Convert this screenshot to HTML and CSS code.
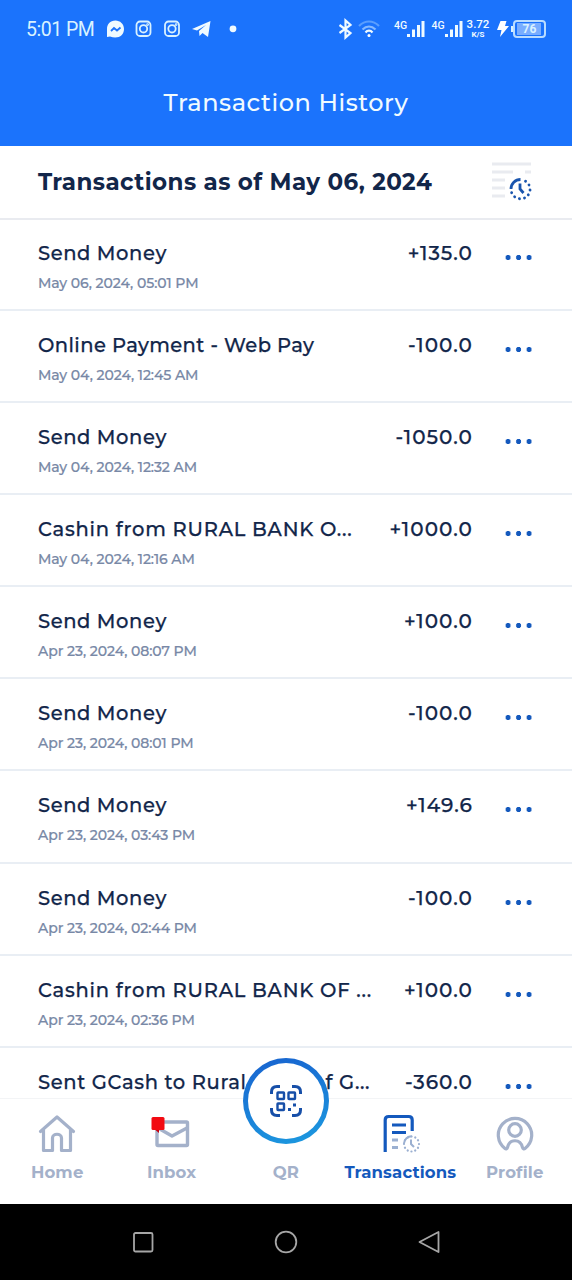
FILE: index.html
```html
<!DOCTYPE html>
<html lang="en">
<head>
<meta charset="utf-8">
<title>Transaction History</title>
<link rel="stylesheet" href="styles.css">
</head>
<body>
<header class="top">
  <div class="status">
    <span class="clock">5:01 PM</span>
    <svg class="status-left" width="140" height="20" viewBox="0 0 140 20" fill="none" stroke="#d9f2ff" stroke-width="1.8">
      <path d="M10.500 1.500C5 1.500 2 5.500 2 10v8l3-.5c8 3 14-1 14-7.500 0-5-4-8.500-8.500-8.500z" fill="#effaff" stroke="none"/>
      <path d="M6 12l3-3 3 2.500 3.500-3" stroke="#1c73fb"/>
      <g id="camera"><rect x="31.500" y="2.500" width="14" height="14.500" rx="3.500"/><circle cx="38.500" cy="9.800" r="3.700"/><circle cx="42.600" cy="5.600" r=".5"/></g>
      <use href="#camera" x="28.500"/>
      <path d="M87 10L105.500 2 103 18l-5.500-4-3 3-.5-5 7-6-9 5.500z" fill="#effaff" stroke="none"/>
      <circle cx="128" cy="9.800" r="3.400" fill="#effaff" stroke="none"/>
    </svg>
    <div class="status-right">
      <svg width="48" height="22" viewBox="0 0 48 22" fill="none" stroke="#effaff" stroke-width="2.200">
        <path d="M1.500 7l11 8-5 4.500v-17l5 4.500-11 8"/>
        <g transform="translate(0 -.5)"><path d="M21 8.500c6-6 14-6 20 0" stroke="#5a9efe"/><path d="M24.500 12c4-4 9-4 13 0" stroke="#86b9ff"/><path d="M27.500 15c2-2.500 5-2.500 7 0"/><circle cx="31" cy="18" r="1.500" fill="#fff" stroke="none"/></g>
      </svg>
      <div class="cell"><span>4G</span><svg width="18" height="18" viewBox="0 0 18 18" fill="#effaff"><path d="M0 14h3v3H0zM5 9.500h3V17H5zM10 5h3v12h-3zM14.500 1h3v16h-3z"/></svg></div>
      <div class="cell"><span>4G</span><svg width="18" height="18" viewBox="0 0 18 18" fill="#effaff"><path d="M0 14h3v3H0zM5 9.500h3V17H5zM10 5h3v12h-3zM14.500 1h3v16h-3z"/></svg></div>
      <div class="speed"><span>3.72</span><span class="unit">K/S</span></div>
      <svg class="bolt" width="12" height="18" viewBox="0 0 12 18" fill="#fff"><path d="M3.500 1h6L8 6h4L3 17l1.500-7H0z"/></svg>
      <div class="battery"><span>76</span></div>
    </div>
  </div>
  <h1>Transaction History</h1>
</header>

<main class="content">
  <div class="summary">
    <h2>Transactions as of May 06, 2024</h2>
    <svg width="42" height="40" viewBox="0 0 42 40" fill="none">
      <path d="M1 2h39M1 10h21M34 10h6M1 18h13M1 26h13M1 34h13" stroke="#e9ebf0" stroke-width="3"/>
      <path d="M20 27a9.500 9.500 0 0 1 9.500-9.500" stroke="#1a55ae" stroke-width="2.800"/>
      <path d="M34.500 19.200a9.500 9.500 0 1 1-14 11" stroke="#1a55ae" stroke-width="2.800" stroke-linecap="round" stroke-dasharray=".1 5"/>
      <path d="M29 21.500v5.500l3.500 4" stroke="#1a55ae" stroke-width="2.800"/>
    </svg>
  </div>
  <ul class="list">
    <li><div class="info"><b>Send Money</b><time>May 06, 2024, 05:01 PM</time></div><span class="amount">+135.0</span><i class="more"></i></li>
    <li><div class="info"><b class="web">Online Payment - Web Pay</b><time>May 04, 2024, 12:45 AM</time></div><span class="amount">-100.0</span><i class="more"></i></li>
    <li><div class="info"><b>Send Money</b><time>May 04, 2024, 12:32 AM</time></div><span class="amount">-1050.0</span><i class="more"></i></li>
    <li><div class="info"><b class="cashin">Cashin from RURAL BANK O...</b><time>May 04, 2024, 12:16 AM</time></div><span class="amount">+1000.0</span><i class="more"></i></li>
    <li><div class="info"><b>Send Money</b><time>Apr 23, 2024, 08:07 PM</time></div><span class="amount">+100.0</span><i class="more"></i></li>
    <li><div class="info"><b>Send Money</b><time>Apr 23, 2024, 08:01 PM</time></div><span class="amount">-100.0</span><i class="more"></i></li>
    <li><div class="info"><b>Send Money</b><time>Apr 23, 2024, 03:43 PM</time></div><span class="amount">+149.6</span><i class="more"></i></li>
    <li><div class="info"><b>Send Money</b><time>Apr 23, 2024, 02:44 PM</time></div><span class="amount">-100.0</span><i class="more"></i></li>
    <li><div class="info"><b class="cashin">Cashin from RURAL BANK OF ...</b><time>Apr 23, 2024, 02:36 PM</time></div><span class="amount">+100.0</span><i class="more"></i></li>
    <li><div class="info"><b class="sent">Sent GCash to Rural Bank of G...</b></div><span class="amount">-360.0</span><i class="more"></i></li>
  </ul>
</main>

<nav class="tabs">
  <a class="tab">
    <svg width="40" height="40" viewBox="0 0 40 40" fill="none" stroke="#a4b1ca" stroke-width="3.200" stroke-linejoin="round" stroke-linecap="round"><path d="M3.500 17.500L20 3l16.500 14.500M6.500 16v20.500h9V24c0-5 9-5 9 0v12.500h9V16"/></svg>
    <span>Home</span>
  </a>
  <a class="tab">
    <svg width="40" height="40" viewBox="0 0 40 40" fill="none" stroke="#a4b1ca" stroke-width="3.400" stroke-linejoin="round"><rect x="5" y="8" width="30.500" height="23.500" rx="1"/><path d="M6 14l14 8 15-8"/><path d="M1 14h6v5z" fill="#c80010" stroke="none"/><rect x="-.5" y="3" width="13" height="13" rx="1.500" fill="#f20a12" stroke="none"/></svg>
    <span>Inbox</span>
  </a>
  <a class="tab qr">
    <span>QR</span>
    <div class="scan">
      <svg width="34" height="34" viewBox="0 0 34 34" fill="none" stroke="#174fa8" stroke-width="3"><path d="M2.500 10V8q0-5.500 5.500-5.500h3M23 2.500h3q5.500 0 5.500 5.500v2M2.500 24v2q0 5.500 5.500 5.500h3M23 31.500h3q5.500 0 5.500-5.500v-2"/><g stroke-width="2.400"><rect x="8.500" y="8.500" width="6.500" height="6.500" rx=".5"/><rect x="19.500" y="8.500" width="6.500" height="6.500" rx=".5"/><rect x="8.500" y="19.500" width="6.500" height="6.500" rx=".5"/></g><path d="M19 24h3v3h-3zM24 19.500h3v3h-3z" fill="#174fa8" stroke="none"/></svg>
    </div>
  </a>
  <a class="tab active">
    <svg width="40" height="40" viewBox="0 0 40 40" fill="none" stroke="#1459bd" stroke-width="3.200"><path d="M5.200 38V6q0-3.500 3.500-3.500h20q3.500 0 3.500 3.500v11M12 11h14M12 18.500h14"/><g stroke="#9bb0d1"><path d="M12 26h6M12 33.500h6"/><path d="M24 29.500a7.800 7.800 0 0 1 7.800-7.300" stroke-width="2"/><circle cx="31.500" cy="30" r="7.500" stroke-width="2.200" stroke-linecap="round" stroke-dasharray=".1 3.800"/><path d="M31 25.500V30l3 3" stroke-width="2"/></g></svg>
    <span>Transactions</span>
  </a>
  <a class="tab">
    <svg width="40" height="40" viewBox="0 0 40 40" fill="none" stroke="#a4b1ca" stroke-width="3.200"><circle cx="20" cy="16" r="6.300"/><path d="M10 34.500A16.700 16.700 0 1 1 30 34.500c-1 .8-2.200.3-2.500-1C25.500 24.500 14.500 24.500 12.500 33.500c-.3 1.300-1.500 1.800-2.500 1z"/></svg>
    <span>Profile</span>
  </a>
</nav>

<footer class="system">
  <svg width="24" height="24" viewBox="0 0 24 24" fill="none" stroke="#a6a6a6" stroke-width="1.800"><rect x="3" y="3" width="18.500" height="18.500" rx="1.500"/></svg>
  <svg width="24" height="24" viewBox="0 0 24 24" fill="none" stroke="#a6a6a6" stroke-width="1.800"><circle cx="12" cy="12" r="10.300"/></svg>
  <svg width="24" height="24" viewBox="0 0 24 24" fill="none" stroke="#a6a6a6" stroke-width="1.800" stroke-linejoin="round"><path d="M2.500 12L21.500 2v20z"/></svg>
</footer>
</body>
</html>
```
FILE: styles.css
```css
* { box-sizing: border-box; }
body {
  margin: 0;
  width: 572px;
  height: 1280px;
  display: flex;
  flex-direction: column;
  overflow: hidden;
  background: #fff;
  color: #12264a;
  font-family: Montserrat, Inter, sans-serif;
}
svg { display: block; flex: none; overflow: visible; }
h1, h2, ul { margin: 0; padding: 0; }
.top { height: 146px; flex: none; background: #1b73fc; color: #f1fbff; }
.status { height: 58px; padding: 0 26px; display: flex; align-items: center; font-family: Roboto, sans-serif; }
.clock { font-size: 19.5px; letter-spacing: -.5px; width: 78.500px; white-space: nowrap; color: #d9f2ff; }
.status-right { margin-left: auto; display: flex; align-items: center; }
.cell { display: flex; align-items: flex-end; width: 37.500px; }
.cell:first-of-type { margin-left: 8px; }
.cell span { font-size: 10.500px; font-weight: 500; line-height: 12px; align-self: flex-start; width: 13px; }
.speed { display: flex; flex-direction: column; align-items: center; font-size: 11.500px; font-weight: 500; line-height: 11px; width: 22px; margin-left: -2px; }
.unit { font-size: 8px; font-weight: 700; line-height: 9px; }
.bolt { margin: 0 4px 0 8px; }
.battery { position: relative; width: 33px; height: 18px; border: 2px solid #b9dcff; border-radius: 4px; background: linear-gradient(#78adff, #78adff) 2px 1px / 24px 12px no-repeat; font-size: 12px; font-weight: 700; line-height: 14px; text-align: center; color: #d9f2ff; }
.battery::before { content: ""; position: absolute; left: -4px; top: 4px; width: 2px; height: 6px; background: #d9f2ff; }
h1 { line-height: 90px; text-align: center; font-size: 24px; font-weight: 500; letter-spacing: .55px; }
.content { height: 952px; flex: none; overflow: hidden; }
.summary { height: 74px; display: flex; align-items: center; justify-content: space-between; padding: 0 39px 0 38px; border-bottom: 2px solid #e9ebf0; }
h2 { font-size: 23px; font-weight: 700; letter-spacing: .43px; white-space: nowrap; }
.list { list-style: none; }
.list li { height: 92.100px; display: flex; align-items: flex-start; padding: 21px 40px 0 38px; border-bottom: 2px solid #e9eef4; }
.list li:first-child { height: 91px; padding-top: 20px; }
.info { flex: 1; min-width: 0; display: flex; flex-direction: column; }
.info b { font-size: 19.500px; line-height: 27px; font-weight: 500; letter-spacing: .6px; white-space: nowrap; -webkit-text-stroke: .25px; }
.info .web { letter-spacing: .42px; }
.info .cashin { letter-spacing: .77px; }
.info .sent { letter-spacing: .64px; }
.info time { margin-top: 6px; font-size: 14px; line-height: 20px; font-weight: 500; letter-spacing: -.07px; color: #7888a6; white-space: nowrap; -webkit-text-stroke: .2px; }
.amount { font-size: 20px; line-height: 27px; font-weight: 500; letter-spacing: 1.050px; margin-right: -1px; -webkit-text-stroke: .25px; }
.more { margin: 15px 0 0 33px; width: 27px; height: 5px; background: radial-gradient(circle, #1459bd 2.300px, transparent 2.900px) -2.200px 0 / 10.500px 5px; }
.tabs { height: 106px; flex: none; display: flex; background: #fff; border-top: 1px solid #f3f4f6; }
.tab { position: relative; width: 114.400px; display: flex; flex-direction: column; align-items: center; padding-top: 15px; color: #a4b1ca; font-size: 16.500px; font-weight: 700; }
.tab span { margin-top: 7px; line-height: 22px; letter-spacing: .15px; }
.tab.active { color: #1459bd; }
.qr span { margin-top: 47px; }
.scan { position: absolute; top: -41px; left: 50%; margin-left: -43px; width: 86px; height: 86px; border: 5px solid transparent; border-radius: 50%; background: linear-gradient(#fff, #fff) padding-box, linear-gradient(165deg, #1862cf, #1c9be0) border-box; display: grid; place-items: center; }
.system { height: 76px; flex: none; display: flex; justify-content: center; gap: 119px; align-items: center; background: #000; }
```
